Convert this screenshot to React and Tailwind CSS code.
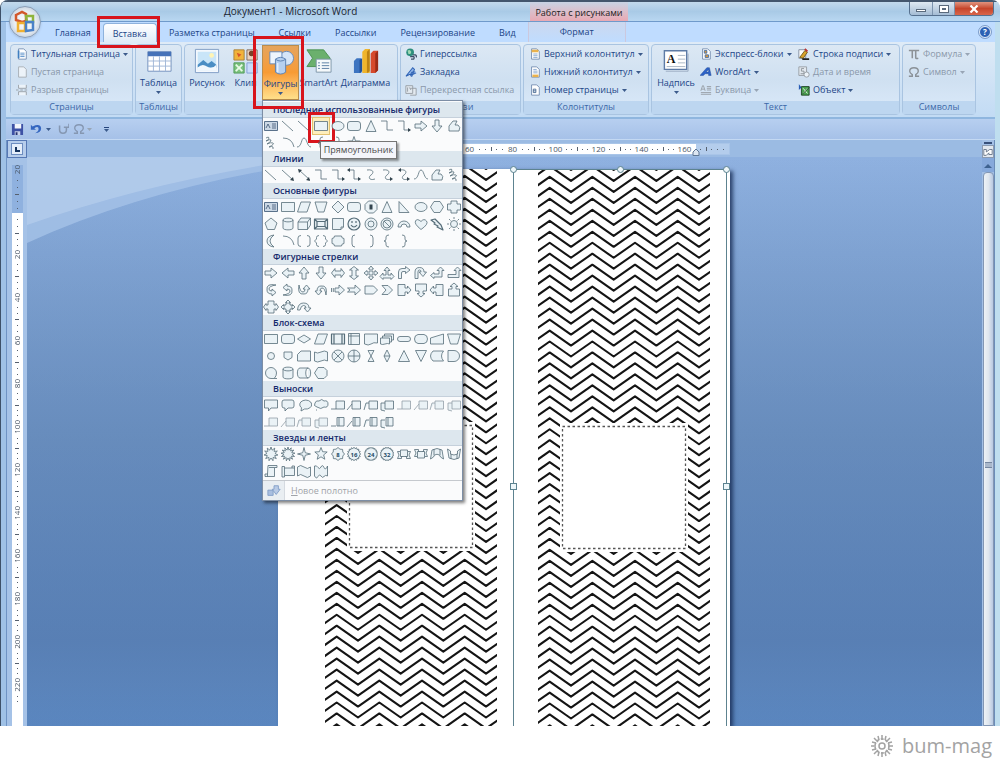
import { clsx } from 'clsx';

// closed outline of a star or seal with n points
function seal(n, outer, inner) {
    const pts = [];
    for (let i = 0; i < n * 2; i++) {
        const r = i % 2 ? inner : outer;
        const a = (Math.PI * i) / n - Math.PI / 2;
        pts.push(`${(8 + r * Math.cos(a)).toFixed(2)} ${(8 + r * Math.sin(a)).toFixed(2)}`);
    }
    return `M${pts.join('L')}Z`;
}

const circle = (r) => `M${8 - r} 8a${r} ${r} 0 1 0 ${r * 2} 0a${r} ${r} 0 1 0 ${-r * 2} 0Z`;
const ARROW = 'M2 6h6V3l6 5l-6 5v-3H2Z';
const DOUBLE_ARROW = 'M1.5 8L5 3.5V6h6V3.5L14.5 8L11 12.5V10H5v2.5Z';
const ELBOW = 'M2 3h6v9h6';
const CURVE = 'M4 3c7-1 7 3 4 5s-2 6 4 4';
const SCRIBBLE = 'M3 3q3-2 3 0t-3 3q4-2 5-1t-4 4q4-2 6-1t-4 4q3-1 4 0l0 2';
const FREEFORM = 'M3 13V8l4-5h4L9 7h3q3 2 1 6Z';
const BEND = 'M2.5 13.5V7q0-3.500 3.500-3.500h3.500V1.500L14 5l-4.500 3.500V6.500H7q-1.500 0-1.500 1.500v5.500Z';
const UTURN = 'M2 13.500V7q0-4.500 4.500-4.500T11 7h2.500L10 11.500L6 7h2q0-2-1.500-2T5 7v6.500Z';
const CURVED = 'M13 3Q3 1 4 8q0 4 5 4v2l4-3.500L9 7v2Q6 9 6 7q0-3 7-4Z';
const RECT = 'M1.500 3.500h13v9h-13Z';
const ROUND = 'M4 3.500h8q2.500 0 2.500 2.500v4q0 2.500-2.500 2.500H4q-2.500 0-2.500-2.500V6q0-2.500 2.500-2.500Z';
const OVAL = 'M2 8a6 4.500 0 1 0 12 0a6 4.500 0 1 0-12 0Z';
const CAN = 'M3 4v8c0 2.500 10 2.500 10 0V4c0-2.500-10-2.500-10 0c0 2.500 10 2.500 10 0';
const BRACE_L = 'M10 2q-3 0-3 2v2q0 2-2 2q2 0 2 2v2q0 2 3 2';
const BOX_ARROW = 'M2 2.500h7V6h2.500V4L15 8l-3.500 4v-2H9v3.500H2Z';

const RECENT = [
    { n: 'Надпись', kind: 'text' },
    { n: 'Линия', d: 'M2 3l11 10', open: true },
    { n: 'Стрелка', d: 'M2 3l11 10', open: true },
    { n: 'Прямоугольник', d: RECT, picked: true },
    { n: 'Овал', d: OVAL },
    { n: 'Скругленный прямоугольник', d: ROUND },
    { n: 'Треугольник', d: 'M8 2.500l5 11H3Z' },
    { n: 'Уступ', d: ELBOW, open: true },
    { n: 'Уступ со стрелкой', d: ELBOW, open: true, head: 'M12 10l3 2l-3 2Z' },
    { n: 'Стрелка вправо', d: ARROW },
    { n: 'Стрелка вниз', d: ARROW, r: 90 },
    { n: 'Полилиния', d: FREEFORM },
    { n: 'Рисованная кривая', d: SCRIBBLE, open: true },
    { n: 'Дуга', d: 'M3 3q9 0 11 9', open: true },
    { n: 'Кривая', d: 'M1 12C6 12 5 3 8 3s3 9 7 9', open: true },
    { n: 'Левая скобка', d: BRACE_L, open: true },
    { n: 'Правая скобка', d: BRACE_L, open: true, r: 180 },
    { n: 'Звезда', d: seal(5, 6.5, 2.6) },
];

const LINES = [
    { n: 'Линия', d: 'M2 3l11 10', open: true },
    { n: 'Стрелка', d: 'M2 3l11 10', open: true, head: 'M14 14l-4-1l3-3Z' },
    { n: 'Двойная стрелка', d: 'M3 3l11 10', open: true, head: 'M14 14l-4-1l3-3ZM2 2l4 1l-3 3Z' },
    { n: 'Уступ', d: ELBOW, open: true },
    { n: 'Уступ со стрелкой', d: ELBOW, open: true, head: 'M12 10l3 2l-3 2Z' },
    { n: 'Уступ с двумя стрелками', d: ELBOW, open: true, head: 'M12 10l3 2l-3 2ZM4 1L1 3l3 2Z' },
    { n: 'Скругленная линия', d: CURVE, open: true },
    { n: 'Скругленная со стрелкой', d: CURVE, open: true, head: 'M11 10l3 2l-3 2Z' },
    { n: 'Скругленная двойная', d: CURVE, open: true, head: 'M11 10l3 2l-3 2ZM5 1L2 3l3 2Z' },
    { n: 'Кривая', d: 'M1 12C6 12 5 3 8 3s3 9 7 9', open: true },
    { n: 'Полилиния', d: FREEFORM },
    { n: 'Рисованная кривая', d: SCRIBBLE, open: true },
];

const BASIC = [
    { n: 'Надпись', kind: 'text' },
    { n: 'Прямоугольник', d: RECT },
    { n: 'Параллелограмм', d: 'M5 3h9.500l-3.500 10H1.500Z' },
    { n: 'Трапеция', d: 'M2 3h12l-3 10H5Z' },
    { n: 'Ромб', d: 'M8 2l6 6l-6 6l-6-6Z' },
    { n: 'Скругленный прямоугольник', d: ROUND },
    { n: 'Восьмиугольник', d: 'M5.500 2h5L14 5.500v5L10.500 14h-5L2 10.500v-5Z', head: 'M6.500 5.500h3v5h-3Z' },
    { n: 'Треугольник', d: 'M8 2.500l5 11H3Z' },
    { n: 'Прямоугольный треугольник', d: 'M3 2.500l10 11H3Z' },
    { n: 'Овал', d: OVAL },
    { n: 'Шестиугольник', d: 'M5 2.500h6l3.500 5.500L11 13.500H5L1.500 8Z' },
    { n: 'Крест', d: 'M5 2h6v3h3.500v6H11v3H5v-3H1.500V5H5Z' },
    { n: 'Пятиугольник', d: 'M8 2l6 5l-2.500 6.500h-7L2 7Z' },
    { n: 'Цилиндр', d: CAN },
    { n: 'Куб', d: 'M2 6l3-4h9.500v7l-3 4.500H2ZM2 6h9.500v7.500M11.500 6l3-4' },
    { n: 'Багетная рамка', d: 'M1.500 3h13v10h-13ZM4 5.500h8v5H4ZM1.500 3L4 5.500M14.500 3L12 5.500M1.500 13L4 10.500M14.500 13L12 10.500', bold: true },
    { n: 'Загнутый угол', d: 'M2.500 2.500h11V11L11 13.500H2.500ZM13.500 11H11v2.500' },
    { n: 'Улыбка', d: `${circle(6)}M5 9q3 4 6 0M6 5v2M10 5v2`, bold: true },
    { n: 'Кольцо', d: `${circle(6)}${circle(3)}` },
    { n: 'Запрет', d: `${circle(6)}${circle(4)}M5 5l6 6` },
    { n: 'Арка', d: 'M2 11a6 6 0 0 1 12 0h-3a3 3 0 0 0-6 0Z' },
    { n: 'Сердце', d: 'M8 13.500Q1 8 2.500 5T8 5.500Q11 2 13.500 5T8 13.500Z' },
    { n: 'Молния', d: 'M2 4l4-1l3 3l1 1l2 2l2 5l-6-3l1-1l-4-2l1-1Z', bold: true },
    { n: 'Солнце', d: `${circle(3.5)}M8 1v2M8 13v2M1 8h2M13 8h2M3 3l1.500 1.500M11.500 11.500L13 13M3 13l1.500-1.500M11.500 4.500L13 3` },
    { n: 'Месяц', d: 'M11 2Q4 3 4 8t7 6Q7 11 7 8t4-6Z' },
    { n: 'Дуга', d: 'M3 3q9 0 11 9', open: true },
    { n: 'Двойные круглые скобки', d: 'M5 2.500Q2 2.500 2 5v6q0 2.500 3 2.500M11 2.500q3 0 3 2.500v6q0 2.500-3 2.500', open: true },
    { n: 'Двойные фигурные скобки', d: 'M6 2.500q-2.500 0-2.500 2V6L1.500 8l2 2v1.500q0 2 2.500 2M10 2.500q2.500 0 2.500 2V6l2 2l-2 2v1.500q0 2-2.500 2', open: true },
    { n: 'Табличка', d: 'M4.500 3h7q0 2.500 2.500 2.500v5q-2.500 0-2.500 2.500h-7q0-2.500-2.500-2.500v-5q2.500 0 2.500-2.500Z' },
    { n: 'Левая круглая скобка', d: 'M9 2Q6 2 6 5v6q0 3 3 3', open: true },
    { n: 'Правая круглая скобка', d: 'M7 2q3 0 3 3v6q0 3-3 3', open: true },
    { n: 'Левая фигурная скобка', d: BRACE_L, open: true },
    { n: 'Правая фигурная скобка', d: BRACE_L, open: true, r: 180 },
];

const ARROWS = [
    { n: 'Вправо', d: ARROW },
    { n: 'Влево', d: ARROW, r: 180 },
    { n: 'Вверх', d: ARROW, r: 270 },
    { n: 'Вниз', d: ARROW, r: 90 },
    { n: 'Двойная горизонтальная', d: DOUBLE_ARROW },
    { n: 'Двойная вертикальная', d: DOUBLE_ARROW, r: 90 },
    { n: 'Четверная', d: 'M8 1l2.500 3H9v3h3V5.500L15 8l-3 2.500V9H9v3h1.500L8 15l-2.500-3H7V9H4v1.500L1 8l3-2.500V7h3V4H5.500Z' },
    { n: 'Тройная', d: 'M8 2l3 3.500H9V10h3V8l3 3.500L12 14.500V13H4v1.500L1 11.500L4 8v2h3V5.500H5Z' },
    { n: 'Углом', d: BEND },
    { n: 'Развернутая', d: UTURN },
    { n: 'Двойная углом', d: 'M1.500 10.500L5 7.500V9h5V5.500H8L11.500 2L15 5.500h-2V12H5v1.500Z' },
    { n: 'Углом вверх', d: 'M2 9.500h8V5.500H8L11.500 2L15 5.500h-2v7H2Z' },
    { n: 'Выгнутая влево', d: CURVED },
    { n: 'Выгнутая вправо', d: CURVED, r: 180 },
    { n: 'Выгнутая вверх', d: CURVED, r: 270 },
    { n: 'Выгнутая вниз', d: CURVED, r: 90 },
    { n: 'Штриховая', d: 'M5 6h4V3l5.500 5L9 13v-3H5ZM1.500 6v4M3.300 6v4' },
    { n: 'С вырезом', d: 'M1.500 6H9V3l5.500 5L9 13v-3H1.500L4 8Z' },
    { n: 'Пятиугольник', d: 'M2 4h8.500L14.500 8l-4 4H2Z' },
    { n: 'Шеврон', d: 'M3 3.500h6L13.500 8L9 12.500H3L7 8Z' },
    { n: 'Выноска вправо', d: BOX_ARROW },
    { n: 'Выноска вниз', d: BOX_ARROW, r: 90 },
    { n: 'Выноска влево', d: BOX_ARROW, r: 180 },
    { n: 'Выноска вверх', d: BOX_ARROW, r: 270 },
    { n: 'Двойная выноска', d: 'M5 2h6v4h2V4.500L15.500 8L13 11.500V10h-2v4H5v-4H3v1.500L0.500 8L3 4.500V6h2Z' },
    { n: 'Четверная выноска', d: 'M8 1l2.500 2.500H9V5h2v2h1.500V5.500L15 8l-2.500 2.500V9H11v2H9v1.500h1.500L8 15l-2.500-2.500H7V11H5V9H3.500v1.500L1 8l2.500-2.500V7H5V5h2V3.500H5.500Z' },
    { n: 'Круговая', d: 'M1.500 11Q2 4 7.500 4T13 9h2l-3.500 4L8 9h2q0-2.500-2.500-2.500T4 11Z' },
];

const FLOW = [
    { n: 'Процесс', d: RECT },
    { n: 'Альтернативный процесс', d: ROUND },
    { n: 'Решение', d: 'M8 4l6.500 4L8 12L1.500 8Z' },
    { n: 'Данные', d: 'M5 3h9.500l-3.500 10H1.500Z' },
    { n: 'Типовой процесс', d: 'M1.500 3h13v10h-13ZM4 3v10M12 3v10', bold: true },
    { n: 'Внутренняя память', d: 'M2.500 2.500h11v11h-11ZM5 2.500v11M2.500 5h11' },
    { n: 'Документ', d: 'M1.500 3h13v9q-4-1-6.500 1t-6.500 0Z' },
    { n: 'Несколько документов', d: 'M1.500 7h9v6q-2-1-4.500 0t-4.500 0ZM3.500 7V5h9v6h-2M5.500 5V3h9v6h-2' },
    { n: 'Знак завершения', d: 'M4 5.500h8a2.500 2.500 0 0 1 0 5H4a2.500 2.500 0 0 1 0-5Z' },
    { n: 'Подготовка', d: 'M5 3.500h6Q14.500 4 14.500 8T11 12.500H5Q1.500 12 1.500 8T5 3.500Z' },
    { n: 'Ручной ввод', d: 'M1.500 7l13-4v10h-13Z' },
    { n: 'Ручное управление', d: 'M1.500 3h13l-3 10h-7Z' },
    { n: 'Узел', d: circle(3.5) },
    { n: 'Ссылка на страницу', d: 'M4 4h8v5.500L8 12L4 9.500Z' },
    { n: 'Карточка', d: 'M5 3h9.500v10h-13V6.500Z' },
    { n: 'Перфолента', d: 'M1.500 4q3 2 6.500 0t6.500 0v9q-3-2-6.500 0t-6.500 0Z' },
    { n: 'Узел суммирования', d: `${circle(6)}M4 4l8 8M12 4l-8 8` },
    { n: 'ИЛИ', d: `${circle(6)}M8 2v12M2 8h12` },
    { n: 'Сопоставление', d: 'M5 2.500h6l-6 11h6Z' },
    { n: 'Сортировка', d: 'M8 2l3 6l-3 6l-3-6ZM5 8h6' },
    { n: 'Извлечение', d: 'M8 2.500l5.500 11h-11Z' },
    { n: 'Объединение', d: 'M2.500 2.500h11L8 13.500Z' },
    { n: 'Сохраненные данные', d: 'M4 3h10.500q-4 5 0 10H4Q-1 8 4 3Z' },
    { n: 'Задержка', d: 'M2 2.500h6a5.500 5.500 0 0 1 0 11H2Z' },
    { n: 'Последовательный доступ', d: 'M14 13.500H8A5.500 5.500 0 1 1 13.500 8q0 3-2 5' },
    { n: 'Магнитный диск', d: CAN },
    { n: 'Прямой доступ', d: 'M4 3h8c3.500 0 3.500 10 0 10H4c-3.500 0-3.500-10 0-10M12 3c-3 0-3 10 0 10' },
    { n: 'Дисплей', d: 'M5 2.500h6l3 3v5l-3 3H5L1.500 8Z' },
];

const tail = ['M1 12h5', 'M1 13l5-6', 'M1 13l2-7h3', 'M6 6H2v7l4 1'];
const callouts = tail.flatMap((_, k) =>
    tail.map((t, i) => ({
        n: `Выноска ${k * 4 + i + 1}`,
        d: k === 3 ? `${t}M7 3.500h7v8.500H7ZM9 3.500v8.500` : `${t}M6 4h8.500v8H6Z`,
        faint: k === 1 || k === 2,
    }))
);
const CALLOUTS = [
    { n: 'Прямоугольная выноска', d: 'M1.500 3h13v8H8l-2.500 3v-3h-4Z' },
    { n: 'Скругленная выноска', d: 'M4 3h8q2 0 2 2v4q0 2-2 2H8l-3 3v-3H4q-2 0-2-2V5q0-2 2-2Z' },
    { n: 'Овальная выноска', d: 'M5 14l.500-3.200A6 4.500 0 1 1 8.500 12Z' },
    { n: 'Выноска-облако', d: 'M4 10Q0 9 2 6Q3 3 6 4q3-3 5 0q4-1 4 3q0 4-4 3q-3 3-7 0ZM3 13h1' },
    ...callouts,
];

const RIBBON = 'M1.500 5.500h3v-1.500h7v1.500h3L13 9l1.500 3.500h-4v-2h-5v2h-4L3 9ZM4.500 5.500v5h2M11.500 5.500v5h-2';
const STARS = [
    { n: 'Вспышка 1', d: seal(11, 7, 4) },
    { n: 'Вспышка 2', d: seal(13, 7, 4) },
    { n: '4-конечная звезда', d: seal(4, 6.5, 1.8) },
    { n: '5-конечная звезда', d: seal(5, 6.5, 2.8) },
    { n: '8-конечная звезда', d: seal(8, 6.5, 5.2), num: 8 },
    { n: '16-конечная звезда', d: seal(16, 6.8, 5.4), num: 16 },
    { n: '24-конечная звезда', d: seal(20, 6.8, 5.6), num: 24 },
    { n: '32-конечная звезда', d: seal(24, 6.8, 5.8), num: 32 },
    { n: 'Лента вверх', d: RIBBON },
    { n: 'Лента вниз', d: RIBBON, r: 180 },
    { n: 'Выгнутая лента вверх', d: 'M1.500 13L3 4q5-3 10 0l1.500 9l-3-2l-1-2q-2.500-1.500-5 0l-1 2ZM5 3v6M11 3v6' },
    { n: 'Выгнутая лента вниз', d: 'M1.500 3L3 12q5 3 10 0l1.500-9l-3 2v3Q8 10 4.500 8V5ZM5 8v5M11 8v5' },
    { n: 'Вертикальный свиток', d: 'M5 2.500h9v2h-2.500v9H2v-2.500h2.500ZM4.500 11v2.500M11.500 4.500H6' },
    { n: 'Горизонтальный свиток', d: 'M2 3.500h2.500V5h10v7.500h-10V14H2ZM4.500 5v7.500M12 5V3h2.500v2' },
    { n: 'Волна', d: 'M1.500 4q3-3 6.500 0t6.500 0v9q-3 3-6.500 0t-6.500 0Z' },
    { n: 'Двойная волна', d: 'M1.500 3q2-1 3.500 1.500T8 4t3 .500T14.500 3v10q-2-1.500-3.500.500T8 13t-3 .500T1.500 13Z' },
];

const SECTIONS = [
    { title: 'Последние использованные фигуры', shapes: RECENT },
    { title: 'Линии', shapes: LINES },
    { title: 'Основные фигуры', shapes: BASIC },
    { title: 'Фигурные стрелки', shapes: ARROWS },
    { title: 'Блок-схема', shapes: FLOW },
    { title: 'Выноски', shapes: CALLOUTS },
    { title: 'Звезды и ленты', shapes: STARS },
];

function ShapeIcon({ s }) {
    if (s.kind === 'text') {
        return (
            <svg viewBox="0 0 16 16" className="h-4 w-4">
                <path d={RECT} fill="#ccd8e5" stroke="#49637f" strokeWidth=".9" />
                <path d="M3 10l2-4l2 4M9 6h4M9 8h4M9 10h4" fill="none" stroke="#253f60" strokeWidth=".7" />
            </svg>
        );
    }
    return (
        <svg viewBox="0 0 16 16" className="h-4 w-4">
            <g transform={s.r ? `rotate(${s.r} 8 8)` : undefined}>
                <path
                    d={s.d}
                    fill={s.open ? 'none' : '#eaf2f6'}
                    stroke={s.faint ? '#93a0a8' : '#566d79'}
                    strokeWidth={s.bold ? 1.2 : 0.8}
                    strokeLinejoin="round"
                />
                {s.head && <path d={s.head} fill="#33444e" />}
            </g>
            {s.num && (
                <text x="8" y="10.500" textAnchor="middle" fontSize="6" fontWeight="700" fill="#1c4a66">{s.num}</text>
            )}
        </svg>
    );
}

function ShapesMenu() {
    return (
        <div className="absolute left-0 top-full z-20 w-[201px] border border-[#7d8ea5] bg-[#fafbfc] pt-px shadow-[2px_2px_3px_rgba(0,0,0,0.5)]">
            {SECTIONS.map((sec) => (
                <section key={sec.title}>
                    <h3 className="h-4 border-b border-[#c5d0db] bg-[#dde7ee] pl-[10px] text-[9px] font-semibold leading-[15px] text-[#14296b]">
                        {sec.title}
                    </h3>
                    <div className="grid grid-cols-12 gap-y-px">
                        {sec.shapes.map((s) => (
                            <button
                                key={s.n}
                                aria-label={s.n}
                                className={clsx('relative flex h-4 items-center justify-center', s.picked && 'bg-[#fdeebc] outline outline-[#e3c270]')}
                            >
                                <ShapeIcon s={s} />
                                {s.picked && (
                                    <>
                                        <span className="absolute -left-[5px] -top-[6px] h-[31px] w-[27px] border-[3px] border-[#d8141c]" />
                                        <span className="absolute left-[7px] top-[23px] z-10 whitespace-nowrap border border-[#767676] bg-[#f4f5fa] px-[3px] text-[9px] leading-4 text-[#4c4c4c] shadow-[2px_2px_2px_rgba(0,0,0,0.4)]">
                                            Прямоугольник
                                        </span>
                                    </>
                                )}
                            </button>
                        ))}
                    </div>
                </section>
            ))}
            <button disabled className="mt-px flex h-5 w-full items-center border-t border-[#c5c9ce] text-[9px] text-[#a0a3a8]">
                <span className="flex h-full w-[22px] items-center justify-center border-r border-[#d5dae0] bg-[#e9eef2]">
                    <svg viewBox="0 0 16 16" className="h-3.5 w-3.5">
                        <path d="M1 7h6v6H1Z" fill="#a9bfe0" stroke="#7f9bc6" />
                        <path d="M8 2h5v4h2l-4.500 6L6 6h2Z" fill="#b9cbe6" stroke="#7f9bc6" />
                    </svg>
                </span>
                <span className="pl-1.5"><u>Н</u>овое полотно</span>
            </button>
        </div>
    );
}

const Caret = ({ dim }) => (
    <svg viewBox="0 0 5 3" className={clsx('h-[3px] w-[5px] shrink-0', dim ? 'text-[#98a5b5]' : 'text-[#3b5a8b]')}>
        <path d="M0 0h5L2.500 3Z" fill="currentColor" />
    </svg>
);

function Group({ label, className, children }) {
    return (
        <section className={clsx('flex shrink-0 flex-col rounded-sm border border-[#a9c4e1] bg-linear-to-b from-[#dce8f4] via-[#cfe0f1] to-[#dbeafa]', className)}>
            <div className="flex flex-1 items-start">{children}</div>
            <h2 className="h-[13px] bg-[#bdd6f0] text-center text-[9px] leading-3 text-[#3c68a8]">{label}</h2>
        </section>
    );
}

function SmallButton({ icon, label, menu, off }) {
    return (
        <button disabled={off} className={clsx('flex h-[18px] items-center gap-[3px] whitespace-nowrap text-[9px]', off ? 'text-[#8a98aa]' : 'text-[#1c4587]')}>
            <svg viewBox="0 0 14 14" className={clsx('h-3 w-3', off && 'opacity-60 grayscale')}>{icon}</svg>
            <span>{label}</span>
            {menu && <Caret dim={off} />}
        </button>
    );
}

function LargeButton({ icon, label, menu, className }) {
    return (
        <button className={clsx('flex h-[55px] flex-col items-center whitespace-nowrap pt-[3px] text-[9px] text-[#1c4587]', className)}>
            <svg viewBox="0 0 28 28" className="h-[26px] w-[26px] shrink-0">{icon}</svg>
            <span className="mt-[3px] leading-3">{label}</span>
            {menu && <span className="mt-0.5 flex"><Caret /></span>}
        </button>
    );
}

const page = <path d="M3 1h6l3 3v9H3Z" fill="#fff" stroke="#6d88ad" />;
const icons = {
    cover: <>{page}<path d="M2 3h2v9H2Z" fill="#3f7fc1" /><path d="M5 6h5M5 8h5M5 10h5" stroke="#4b86c5" /></>,
    blank: page,
    pageBreak: <path d="M3 1v4h9V1M3 13V9h9v4M0 7h3M5 7h3M10 7h3" fill="#fff" stroke="#5d6c80" />,
    link: <><circle cx="6" cy="5" r="4.500" fill="#2e8f7d" /><path d="M3 3q3-2 4 1T4 7" fill="#9fd8b4" /><path d="M6 10h4a2 2 0 0 1 0 3H7M9 8h3a2 2 0 0 1 1 3" fill="none" stroke="#3d4d66" strokeWidth="1.500" /></>,
    bookmark: <path d="M1 12L9 2l2 2l-3 8q-2 0-1-3t5-2M1 12l4-2l4 0l4-2" fill="#8fb4e8" stroke="#2e62b4" strokeWidth="1.200" />,
    crossRef: <path d="M1 2h8v9H1ZM6 5h7v8H6M3 4v5M5 4l2 3" fill="#eee" stroke="#667" />,
    header: <>{page}<path d="M3 2h8v3H3Z" fill="#e9b24e" /><path d="M5 7h5M5 9h5M5 11h5" stroke="#7fa2cc" /></>,
    footer: <>{page}<path d="M4 10h7v3H4Z" fill="#e9b24e" /><path d="M5 4h4M5 6h5M5 8h5" stroke="#7fa2cc" /></>,
    pageNum: <>{page}<path d="M5 6h3v4H5ZM5 8h3" fill="none" stroke="#40648f" /></>,
    quickParts: <>{page}<path d="M5 3h3v3H5ZM6 8h4v3H6Z" fill="#e49a35" stroke="#3b6ba8" /></>,
    wordArt: <path d="M0 11L8 2h3l2 9h-3V9H6l-2 2ZM7 7h3V4Z" fill="#2d62c8" stroke="#17418f" strokeWidth=".5" />,
    dropCap: <path d="M1 8l2-6h1l2 6M2 6h3M8 3h5M8 5h5M8 7h5M1 10h12M1 12h12" fill="none" stroke="#5c6b80" />,
    sign: <><path d="M1 2h8v10H1Z" fill="#fff" stroke="#7b8798" /><path d="M2 11L8 3l3 2l-5 7Z" fill="#d9a32c" stroke="#6b5317" /><path d="M5 13h8" stroke="#222" strokeWidth="2" /><path d="M8 1l3 3" stroke="#b33" strokeWidth="2" /></>,
    date: <><path d="M1 1h9v10H1Z" fill="#eee" stroke="#667" /><path d="M7 3H4v3h3v3H3" fill="none" stroke="#556" /><circle cx="10" cy="10" r="3" fill="#fff" stroke="#667" /></>,
    object: <><path d="M4 3h9v10H4Z" fill="#4aa34e" stroke="#1c3d22" /><path d="M1 0v7l3-3Z" fill="#265bb5" /><path d="M6 5l5 6M11 5l-5 6" stroke="#fff" /><path d="M5 12l8-8" stroke="#153b1c" /></>,
    pi: <path d="M1 3h12M5 3v9M9 3v8q0 2 3 1" fill="none" stroke="#505c6e" strokeWidth="1.800" />,
    omega: <path d="M1 12h4V10Q2 8 2 6q0-4 5-4t5 4q0 2-3 4v2h4" fill="none" stroke="#505c6e" strokeWidth="1.600" />,
};

const big = {
    table: (
        <>
            <path d="M2 4h25v21H2Z" fill="#fff" stroke="#6f8ebb" />
            <path d="M2 4h25v5H2Z" fill="#4672b8" />
            <path d="M2 14h25M2 19.500h25M8 9v16M14.500 9v16M21 9v16" stroke="#9fb6d6" />
        </>
    ),
    picture: (
        <>
            <path d="M1.500 1.500h25v25h-25Z" fill="#f4f8fd" stroke="#7d9cc4" />
            <path d="M4 4h20v20H4Z" fill="#c9e5f8" />
            <path d="M4 18l6-5l5 4l4-3l5 4v3H4Z" fill="#4b8ec4" />
            <path d="M4 21q5-5 10-1t10-2v6H4Z" fill="#f2f8fd" />
            <circle cx="19" cy="8" r="2.500" fill="#fff4b4" />
        </>
    ),
    clip: (
        <>
            <path d="M1 2h11v11H1Z" fill="#f2b33a" stroke="#a9823a" />
            <path d="M4 5l5 2l-3 3Z" fill="#d8542a" />
            <path d="M15 2h11v11H15Z" fill="#ead2bd" stroke="#7e6a5d" />
            <circle cx="20" cy="6" r="3" fill="#7a4228" />
            <path d="M1 16h11v11H1Z" fill="#7cc27e" stroke="#4f9b59" />
            <path d="M3 18l7 7M10 18l-7 7" stroke="#e8fae6" strokeWidth="2" />
            <path d="M15 16h11v11H15Z" fill="#c9dcfa" stroke="#7f9fd4" />
        </>
    ),
    shapes: (
        <>
            <circle cx="20" cy="10" r="7.500" fill="#d5e5f7" stroke="#6488b5" />
            <path d="M2 3h13v13H2Z" fill="#eef5fc" stroke="#6488b5" />
            <path d="M8 11v14q5.500 4 11 0V11q-5.500-4-11 0Z" fill="#b5d0f0" stroke="#5a80b0" />
            <path d="M8 11q5.500 4 11 0" fill="none" stroke="#5a80b0" />
            <path d="M10.500 15v10" stroke="#e6f0fb" strokeWidth="1.500" />
        </>
    ),
    smartArt: (
        <>
            <path d="M1 2h18l7 9l-5 9H1l6-9Z" fill="#6bb06d" stroke="#4a9150" />
            <path d="M11 12h16v14H11Z" fill="#f5f9fb" stroke="#7b93a8" />
            <path d="M17 16h8M17 19h8M17 22h8M13 16h2M13 19h2M13 22h2" stroke="#557ba0" />
        </>
    ),
    chart: (
        <>
            <path d="M1 14l3-3h5v16H1Z" fill="#3d74c0" />
            <path d="M7 13l3-2v14l-3 2Z" fill="#24539a" />
            <path d="M10 4l3-3h5v26h-8Z" fill="#f0b52c" />
            <path d="M15 4l3-3v24l-3 2Z" fill="#bd8313" />
            <path d="M19 6l3-3h5v21l-3 3h-5Z" fill="#d6492c" />
            <path d="M24 6l3-3v21l-3 3Z" fill="#9c2a16" />
        </>
    ),
    textBox: (
        <>
            <path d="M1.500 3h24v20h-24Z" fill="#fff" stroke="#5d7ba6" strokeWidth="1.500" />
            <path d="M3 25h24V6" fill="none" stroke="#9aaabf" />
            <path d="M16 8h8M16 12h8M16 16h8M4 20h20" stroke="#a7b4c4" />
            <text x="4" y="16" fontSize="13" fontWeight="700" fontFamily="Liberation Serif, serif" fill="#111">A</text>
        </>
    ),
};

function RedFrame({ className }) {
    return <span className={clsx('pointer-events-none absolute z-30 border-[3px] border-[#d8141c]', className)} />;
}

function Ribbon() {
    return (
        <div className="flex h-[77px] gap-0.5 border-b-2 border-[#8fb6df] bg-linear-to-b from-[#dfebf7] to-[#c2dbf4] px-1 py-0.5">
            <Group label="Страницы" className="w-[123px]">
                <div className="flex flex-col pl-[5px]">
                    <SmallButton icon={icons.cover} label="Титульная страница" menu />
                    <SmallButton icon={icons.blank} label="Пустая страница" off />
                    <SmallButton icon={icons.pageBreak} label="Разрыв страницы" off />
                </div>
            </Group>
            <Group label="Таблицы" className="w-[47px]">
                <LargeButton icon={big.table} label="Таблица" menu className="w-full" />
            </Group>
            <Group label="" className="w-[214px]">
                <LargeButton icon={big.picture} label="Рисунок" className="w-[44px]" />
                <LargeButton icon={big.clip} label="Клип" className="w-[33px]" />
                <div className="relative">
                    <LargeButton
                        icon={big.shapes}
                        label="Фигуры"
                        menu
                        className="w-[37px] border border-[#b98d4e] bg-linear-to-b from-[#e5a45c] via-[#f79b34] to-[#ffe08a]"
                    />
                    <ShapesMenu />
                    <RedFrame className="-left-[9px] -top-[9px] h-[73px] w-[51px]" />
                </div>
                <LargeButton icon={big.smartArt} label="SmartArt" className="w-[39px]" />
                <LargeButton icon={big.chart} label="Диаграмма" className="w-[55px]" />
            </Group>
            <Group label="Связи" className="w-[121px]">
                <div className="flex flex-col pl-1">
                    <SmallButton icon={icons.link} label="Гиперссылка" />
                    <SmallButton icon={icons.bookmark} label="Закладка" />
                    <SmallButton icon={icons.crossRef} label="Перекрестная ссылка" off />
                </div>
            </Group>
            <Group label="Колонтитулы" className="w-[126px]">
                <div className="flex flex-col pl-[5px]">
                    <SmallButton icon={icons.header} label="Верхний колонтитул" menu />
                    <SmallButton icon={icons.footer} label="Нижний колонтитул" menu />
                    <SmallButton icon={icons.pageNum} label="Номер страницы" menu />
                </div>
            </Group>
            <Group label="Текст" className="w-[249px]">
                <LargeButton icon={big.textBox} label="Надпись" menu className="w-[48px]" />
                <div className="flex w-[98px] flex-col">
                    <SmallButton icon={icons.quickParts} label="Экспресс-блоки" menu />
                    <SmallButton icon={icons.wordArt} label="WordArt" menu />
                    <SmallButton icon={icons.dropCap} label="Буквица" menu off />
                </div>
                <div className="flex flex-col">
                    <SmallButton icon={icons.sign} label="Строка подписи" menu />
                    <SmallButton icon={icons.date} label="Дата и время" off />
                    <SmallButton icon={icons.object} label="Объект" menu />
                </div>
            </Group>
            <Group label="Символы" className="w-[74px]">
                <div className="flex flex-col pl-[5px]">
                    <SmallButton icon={icons.pi} label="Формула" menu off />
                    <SmallButton icon={icons.omega} label="Символ" menu off />
                </div>
            </Group>
        </div>
    );
}

const TABS = ['Главная', 'Вставка', 'Разметка страницы', 'Ссылки', 'Рассылки', 'Рецензирование', 'Вид'];

function OfficeOrb() {
    return (
        <button aria-label="Office" className="absolute left-[8px] top-[6px] z-10 h-8 w-8 rounded-full border border-[#8b9db5] bg-radial from-white via-[#e8edf3] to-[#a9b9cd] shadow">
            <svg viewBox="0 0 30 30" className="h-full w-full">
                <g fill="none" strokeWidth="2.500">
                    <path d="M6 8l6-3l4 2v7l-4 1l-6-2Z" stroke="#d2572b" />
                    <path d="M16 9h7v6h-6Z" stroke="#8fb43c" />
                    <path d="M8 16h7v8H8Z" stroke="#f0b030" />
                    <path d="M16 15h7v8l-7 1Z" stroke="#4b82c8" />
                </g>
            </svg>
        </button>
    );
}

function TitleBar() {
    return (
        <header className="relative flex h-[22px] items-stretch border-b border-[#6f9acb] border-t-2 border-t-[#44566d] bg-linear-to-b from-[#c3d9ec] via-[#a9cae6] to-[#b9d7f1]">
            <h1 className="w-[529px] pl-[223px] text-[10px] leading-[19px] text-[#1b2430]">Документ1 - Microsoft Word</h1>
            <div className="w-[98px] bg-linear-to-b from-[#c8d3e4] to-[#e9a9b3] text-center text-[9px] leading-[21px] text-[#222]">Работа с рисунками</div>
            <div className="ml-auto mr-1.5 flex h-[14px] overflow-hidden rounded-b border border-t-0 border-[#56708e]">
                <button aria-label="Свернуть" className="flex w-[23px] items-center justify-center border-r border-[#7d94ae] bg-linear-to-b from-[#dfe9f2] to-[#a4bcd4]">
                    <span className="mt-1 h-[3px] w-2.5 border border-[#5a6a7c] bg-white" />
                </button>
                <button aria-label="Развернуть" className="flex w-[22px] items-center justify-center border-r border-[#7d94ae] bg-linear-to-b from-[#dfe9f2] to-[#a4bcd4]">
                    <span className="h-1.5 w-2 border-2 border-white bg-[#5a6a7c] outline outline-[#5a6a7c]" />
                </button>
                <button aria-label="Закрыть" className="flex w-[38px] items-center justify-center bg-linear-to-b from-[#e0937e] via-[#c6452b] to-[#d9654a]">
                    <svg viewBox="0 0 10 8" className="h-2 w-2.5"><path d="M1.500 0.500l7 7M8.500 0.500l-7 7" stroke="#fff" strokeWidth="2.200" /></svg>
                </button>
            </div>
        </header>
    );
}

function TabBar() {
    return (
        <nav className="flex h-5 items-end bg-[#bfdcff] pl-[37px] text-[9px] text-[#1c4587]">
            {TABS.map((t) => (
                <div key={t} className="relative">
                    <button
                        className={clsx(
                            'block h-[19px] whitespace-nowrap leading-[17px]',
                            t === 'Вставка' ? 'rounded-t border border-b-0 border-[#8eb2dc] bg-linear-to-b from-white to-[#dfebf7] px-[9px]' : 'px-3'
                        )}
                    >
                        {t}
                    </button>
                    {t === 'Вставка' && <RedFrame className="-left-[6px] -right-[3px] -top-[7px] h-8" />}
                </div>
            ))}
            <button className="h-full w-[98px] border-x border-[#cbc8de] bg-linear-to-b from-[#ccd8ee] to-[#bfdcff]">Формат</button>
            <button aria-label="Справка" className="mb-1 ml-auto mr-1 flex h-3 w-3 items-center justify-center rounded-full border border-[#e8f1fb] bg-[#2d61b4] text-[8px] font-bold text-white outline outline-[#7d9cc9]">
                ?
            </button>
        </nav>
    );
}

function QuickAccess() {
    return (
        <div className="flex h-[21px] items-center border-b border-[#c4d9f3] bg-linear-to-b from-[#b7cff0] to-[#a6c1e8] pl-[5px] text-[#8597b2]">
            <button aria-label="Сохранить">
                <svg viewBox="0 0 14 14" className="h-[13px] w-[13px]">
                    <path d="M1 1h12v12H1Z" fill="#3d51a5" />
                    <path d="M4 1h7v5H4Z" fill="#f3f5fb" />
                    <path d="M4 9h6v4H4Z" fill="#c9d2ea" />
                    <path d="M5 10h2v3H5Z" fill="#26336f" />
                </svg>
            </button>
            <button aria-label="Отменить" className="ml-1.5 flex items-center gap-1">
                <svg viewBox="0 0 14 14" className="h-3 w-3"><path d="M1 2v6h6L5 6q5-3 5 1q0 3-4 5q7-1 7-6q-1-6-10-2Z" fill="#3567c0" /></svg>
                <Caret />
            </button>
            <button aria-label="Повторить" className="ml-1.5">
                <svg viewBox="0 0 14 14" className="h-3 w-3"><path d="M3 3v5q0 4 4 4t4-4V5M8 5h6V1" fill="none" stroke="currentColor" strokeWidth="1.800" /></svg>
            </button>
            <button aria-label="Символ" className="ml-1 flex items-center gap-0.5">
                <svg viewBox="0 0 14 14" className="h-3 w-3">
                    <path d="M1 12h4V10Q2 8 2 6q0-4 5-4t5 4q0 2-3 4v2h4" fill="none" stroke="currentColor" strokeWidth="1.600" />
                </svg>
                <Caret dim />
            </button>
            <button aria-label="Настройка панели" className="ml-3 flex flex-col gap-px">
                <span className="h-px w-[5px] bg-[#26457c]" />
                <Caret />
            </button>
        </div>
    );
}

function HorizontalRuler() {
    return (
        <div className="flex h-3 w-[452px] border border-[#a9c5e8] bg-[#b4cdec] text-[8px] leading-none text-[#4a5666]">
            <div className="w-16" />
            <div className="relative flex w-[353px] items-center bg-white pl-[19px]">
                {[20, 40, 60, 80, 100, 120, 140, 160].map((n) => (
                    <div key={n} className="flex w-[43px] shrink-0 items-center justify-between">
                        <i className="h-1 w-px bg-[#56606e]" />
                        <RulerDot /><RulerDot />
                        <span>{n}</span>
                        <RulerDot /><RulerDot /><i />
                    </div>
                ))}
                <svg viewBox="0 0 8 8" className="absolute -right-1 top-1 h-2 w-2"><path d="M1 7.500V4l3-3l3 3v3.500Z" fill="#dce6f2" stroke="#5f7795" /></svg>
            </div>
            <div className="flex flex-1 items-center justify-evenly">
                <RulerDot /><i className="h-1 w-px bg-[#56606e]" /><RulerDot /><RulerDot /><RulerDot />
            </div>
        </div>
    );
}

const RulerDot = () => <i className="h-px w-px bg-[#56606e]" />;

function VerticalTick({ n }) {
    return (
        <div className="flex h-[43px] shrink-0 flex-col items-center justify-between">
            <i className="h-px w-1 bg-[#56606e]" />
            <RulerDot /><RulerDot />
            <span className="rotate-180 [writing-mode:vertical-rl]">{n}</span>
            <RulerDot /><RulerDot /><i />
        </div>
    );
}

function VerticalRuler() {
    return (
        <div className="flex w-5 shrink-0 flex-col items-center overflow-hidden bg-[#a5c2e7] text-[8px] leading-none text-[#4a5666]">
            <button aria-label="Табуляция" className="flex h-[18px] w-full shrink-0 items-center justify-center border border-[#5678b4] bg-[#b7cdeb]">
                <span className="flex h-3 w-3 items-center justify-center border border-[#6d8dc0] bg-[#e5eefa]">
                    <i className="h-[5px] w-[5px] border-b-2 border-l-2 border-[#16335e]" />
                </span>
            </button>
            <div className="mt-[7px] flex h-[48px] w-[11px] shrink-0 flex-col items-center justify-between bg-[#8fb1df] pb-1">
                <span className="rotate-180 [writing-mode:vertical-rl]">20</span>
                <RulerDot /><RulerDot /><i className="h-px w-1 bg-[#56606e]" /><RulerDot /><RulerDot />
            </div>
            <div className="flex w-[11px] flex-1 flex-col items-center bg-white">
                <div className="flex h-5 shrink-0 flex-col items-center justify-evenly"><RulerDot /><RulerDot /></div>
                {[20, 40, 60, 80, 100, 120, 140, 160, 180, 200, 220].map((n) => <VerticalTick key={n} n={n} />)}
            </div>
        </div>
    );
}

// zigzag strip with a blank label window cut out
function Chevrons() {
    const rows = [];
    for (let y = -22; y < 570; y += 10.97) {
        let d = `M-31 ${y + 7}`;
        for (let i = 0; i < 6; i++) {
            const x = -31 + i * 42.67;
            d += `L${x} ${y + 7}L${x + 21.33} ${y + 22}`;
        }
        rows.push(d);
    }
    return (
        <svg viewBox="0 0 172 557" className="h-[557px] w-[172px]">
            <path d={rows.join('')} fill="none" stroke="#141414" strokeWidth="2.100" strokeLinejoin="round" />
            <path d="M22 253h128v129H22Z" fill="#fff" />
            <path d="M24.500 256.500h123v122h-123Z" fill="none" stroke="#555" strokeWidth="1.300" strokeDasharray="2.500 2.500" />
        </svg>
    );
}

const Handle = ({ className }) => (
    <i className={clsx('absolute h-[7px] w-[7px] border border-[#5d8390] bg-[#eef7fa]', className)} />
);

function Document() {
    return (
        <div className="flex min-h-0 flex-1 flex-col items-center overflow-hidden">
            <div className="flex w-full justify-center bg-[#9bbbe3] pb-0.5 pr-0.5 pt-[3px]">
                <HorizontalRuler />
            </div>
            <div className="relative flex w-full flex-1 justify-center overflow-hidden bg-linear-to-b from-[#8fb1e0] via-[#7297c5] via-50% to-[#5a86bf] pr-0.5 pt-3">
                <div className="absolute inset-0 bg-linear-to-b from-transparent via-[#5277ac] via-85% to-transparent opacity-60" />
                <svg viewBox="0 0 480 90" preserveAspectRatio="none" className="absolute left-0 top-0 h-[90px] w-[480px]">
                    <path d="M0 0H330Q140 22 0 86Z" fill="#a3c1e6" opacity=".85" />
                    <path d="M0 0H290Q130 22 0 68Z" fill="#b6cfed" opacity=".7" />
                </svg>
                <main className="relative flex w-[452px] items-start bg-white shadow-[3px_2px_4px_rgba(20,40,80,0.8)]">
                    <div className="w-[235px] pl-[47px]"><Chevrons /></div>
                    <div className="relative w-[214px] border border-[#5d8390] pl-6">
                        <Chevrons />
                        <Handle className="-left-1 -top-1 rounded-full" />
                        <Handle className="-top-1 left-[103px] rounded-full" />
                        <Handle className="-right-1 -top-1 rounded-full" />
                        <Handle className="-left-1 top-[313px]" />
                        <Handle className="-right-1 top-[313px]" />
                    </div>
                </main>
            </div>
        </div>
    );
}

function ScrollBar() {
    return (
        <div className="flex w-[13px] shrink-0 flex-col items-center border-r border-[#6c8db8] bg-[#a3c0e6]">
            <i className="mt-0.5 h-0.5 w-2 bg-[#38507a]" />
            <button aria-label="Линейка" className="mt-px flex h-[13px] w-full items-center justify-center border border-[#8c9bb0] bg-[#e2e8ef]">
                <svg viewBox="0 0 12 12" className="h-2.5 w-2.5"><path d="M1 3h3v3l4-3h3v6H7V7L4 10H1Z" fill="#fff" stroke="#5b6a7e" /></svg>
            </button>
            <button aria-label="Вверх" className="flex h-[14px] w-full items-center justify-center bg-[#86a9db]">
                <svg viewBox="0 0 8 5" className="h-[5px] w-2"><path d="M0 5L4 1l4 4Z" fill="#3e6290" /></svg>
            </button>
            <div className="flex w-[11px] flex-1 flex-col items-center justify-center rounded-t border border-[#8397b4] bg-linear-to-r from-[#edf2f6] via-[#dfe6ee] to-[#b8c9e2] pt-8">
                <i className="h-1.5 w-[7px] border-y border-[#76879f] bg-[#aab8cb]" />
            </div>
        </div>
    );
}

export default function App() {
    return (
        <div className="flex h-screen flex-col bg-white font-['Open_Sans','Noto_Sans',sans-serif]">
            <div className="relative flex min-h-0 flex-1 flex-col overflow-hidden rounded-t-lg border-l border-[#3d5068] bg-[#b9d9ef]">
                <TitleBar />
                <OfficeOrb />
                <div className="flex min-h-0 flex-1 flex-col border-l-[5px] border-r-[5px] border-l-[#9fc1e6] border-r-[#bfdeef]">
                    <TabBar />
                    <Ribbon />
                    <QuickAccess />
                    <div className="flex min-h-0 flex-1 border-l border-[#6f93c4]">
                        <VerticalRuler />
                        <Document />
                        <ScrollBar />
                    </div>
                </div>
            </div>
            <footer className="flex h-10 shrink-0 items-center justify-end gap-2 pr-2 text-[#a3a3a3]">
                <svg viewBox="0 0 24 24" className="h-6 w-6" fill="none" stroke="currentColor" strokeWidth="1.500">
                    <circle cx="12" cy="12" r="3" />
                    <circle cx="12" cy="12" r="7" strokeDasharray="3 1.500" />
                    <path d="M12 1v5M12 18v5M1 12h5M18 12h5M4 4l4 4M16 16l4 4M4 20l4-4M16 8l4-4M8 2l1 4M16 2l-1 4M8 22l1-4M16 22l-1-4M2 8l4 1M2 16l4-1M22 8l-4 1M22 16l-4-1" />
                </svg>
                <span className="text-xl">bum-mag</span>
            </footer>
        </div>
    );
}
